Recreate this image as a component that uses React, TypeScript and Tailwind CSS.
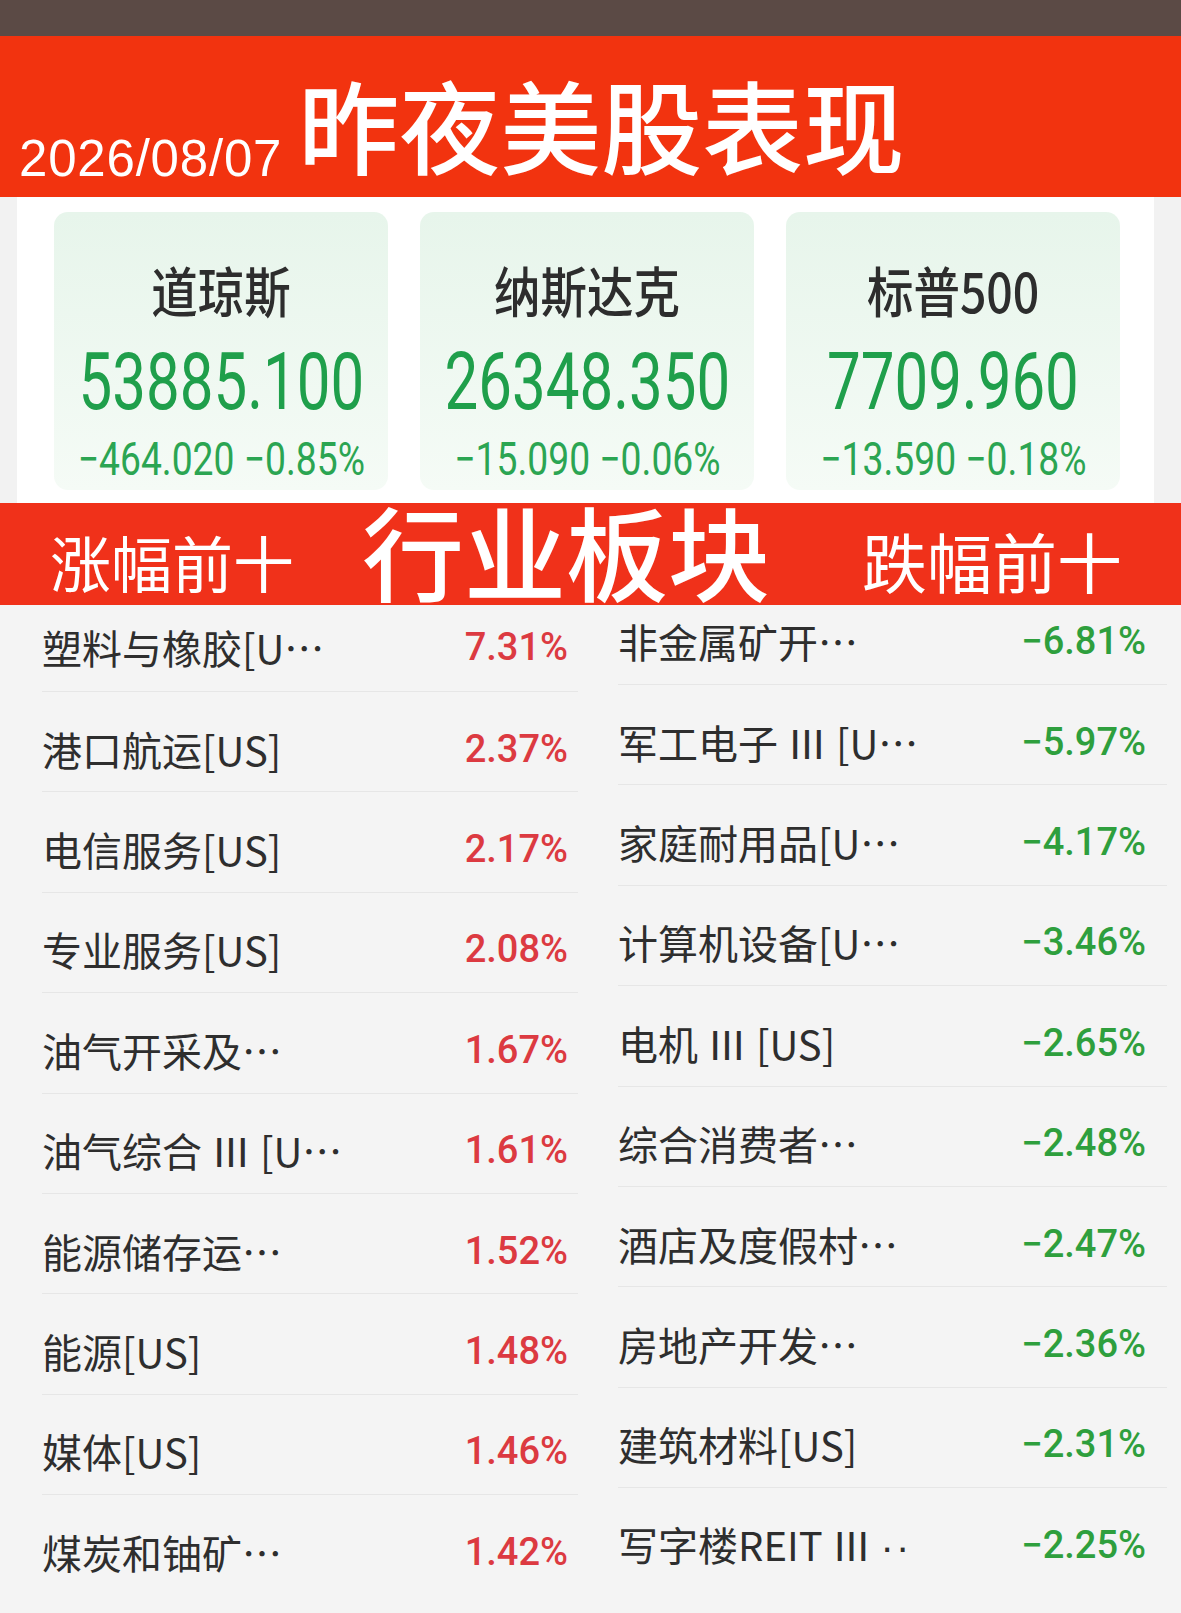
import React from "react";

const CJK = "font-['Noto_Sans_CJK_SC',sans-serif]";
const NUM = "font-['Roboto','Noto_Sans_CJK_SC',sans-serif]";

type Idx = { name: string; value: string; change: string };

const indices: Idx[] = [
  { name: "道琼斯", value: "53885.100", change: "\u2212464.020 \u22120.85%" },
  { name: "纳斯达克", value: "26348.350", change: "\u221215.090 \u22120.06%" },
  { name: "标普500", value: "7709.960", change: "\u221213.590 \u22120.18%" },
];

type Row = { n: React.ReactNode; v: string };

const dots = <span className="font-['Liberation_Sans',sans-serif] tracking-[2px]">··</span>;

const gainers: Row[] = [
  { n: "塑料与橡胶[U…", v: "7.31%" },
  { n: "港口航运[US]", v: "2.37%" },
  { n: "电信服务[US]", v: "2.17%" },
  { n: "专业服务[US]", v: "2.08%" },
  { n: "油气开采及…", v: "1.67%" },
  { n: "油气综合 Ⅲ [U…", v: "1.61%" },
  { n: "能源储存运…", v: "1.52%" },
  { n: "能源[US]", v: "1.48%" },
  { n: "媒体[US]", v: "1.46%" },
  { n: "煤炭和铀矿…", v: "1.42%" },
];

const losers: Row[] = [
  { n: "非金属矿开…", v: "\u22126.81%" },
  { n: "军工电子 Ⅲ [U…", v: "\u22125.97%" },
  { n: "家庭耐用品[U…", v: "\u22124.17%" },
  { n: "计算机设备[U…", v: "\u22123.46%" },
  { n: "电机 Ⅲ [US]", v: "\u22122.65%" },
  { n: "综合消费者…", v: "\u22122.48%" },
  { n: "酒店及度假村…", v: "\u22122.47%" },
  { n: "房地产开发…", v: "\u22122.36%" },
  { n: "建筑材料[US]", v: "\u22122.31%" },
  { n: <>写字楼REIT Ⅲ {dots}</>, v: "\u22122.25%" },
];

function Card({ d }: { d: Idx }) {
  return (
    <div className="h-[278px] rounded-[14px] bg-linear-to-b from-[#e7f5eb] to-[#f5fbf6] flex flex-col items-center overflow-visible">
      <div className={`mt-[51px] h-[54px] text-[54px] leading-none font-medium text-[#2d2d2d] whitespace-nowrap scale-x-[0.86] ${CJK}`}>
        {d.name}
      </div>
      <div className={`mt-[25px] h-[80px] text-[80px] leading-none font-normal text-[#1f9f4b] whitespace-nowrap scale-x-[0.75] ${NUM}`}>
        {d.value}
      </div>
      <div className={`mt-[14px] h-[46px] text-[46px] leading-none text-[#2ba552] whitespace-nowrap scale-x-[0.81] ${NUM}`}>
        {d.change}
      </div>
    </div>
  );
}

function Column({
  rows,
  firstH,
  firstPb,
  color,
  pr,
}: {
  rows: Row[];
  firstH: string;
  firstPb: string;
  color: string;
  pr: string;
}) {
  return (
    <div className="flex flex-col">
      {rows.map((r, i) => {
        const first = i === 0;
        const last = i === rows.length - 1;
        return (
          <div
            key={i}
            className={`flex items-center justify-between ${first ? `${firstH} ${firstPb}` : "h-[100.4px] pt-[14px]"} ${last ? "" : "border-b border-[#e6e6e6]"} ${pr}`}
          >
            <span lang="zh-CN" className={`text-[40px] leading-none text-[#2e2e2e] whitespace-pre ${CJK}`}>
              {r.n}
            </span>
            <span className={`text-[38px] leading-none font-medium whitespace-nowrap ${color} ${NUM}`}>{r.v}</span>
          </div>
        );
      })}
    </div>
  );
}

export default function App() {
  return (
    <div lang="zh-CN" className="w-[1181px] h-[1613px] overflow-hidden bg-[#f4f4f4] flex flex-col">
      {/* top dark bar */}
      <div className="h-[36px] shrink-0 bg-[#5b4a45]" />

      {/* red header */}
      <div className="h-[161px] shrink-0 bg-[#f2330f] flex items-start pl-[19px]">
        <div className="mt-[97px] text-[51px] leading-none tracking-[0.8px] text-white whitespace-nowrap font-['Liberation_Sans',sans-serif]">
          2026/08/07
        </div>
        <div className={`ml-[16px] mt-[37px] text-[101px] leading-none font-medium text-white whitespace-nowrap ${CJK}`}>
          昨夜美股表现
        </div>
      </div>

      {/* index cards */}
      <div className="h-[306px] shrink-0 bg-[#f2f2f2] flex">
        <div className="ml-[17px] w-[1137px] bg-white pt-[15px] pl-[37px] pr-[34px]">
          <div className="grid grid-cols-3 gap-[32px]">
            {indices.map((d) => (
              <Card key={d.name} d={d} />
            ))}
          </div>
        </div>
      </div>

      {/* sector banner */}
      <div className="h-[102px] shrink-0 bg-[#f0311a] flex items-start text-white">
        <div className={`ml-[50px] mt-[28px] text-[61px] leading-none font-normal whitespace-nowrap ${CJK}`}>涨幅前十</div>
        <div className={`ml-[68px] mt-[-4px] text-[102px] leading-none font-medium whitespace-nowrap ${CJK}`}>行业板块</div>
        <div className={`ml-[92px] mt-[25px] text-[65px] leading-none font-normal whitespace-nowrap ${CJK}`}>跌幅前十</div>
      </div>

      {/* lists */}
      <div className="flex-1 flex">
        <div className="ml-[42px] w-[536px]">
          <Column rows={gainers} firstH="h-[87px]" firstPb="pb-[2px]" color="text-[#dc3a41]" pr="pr-[10px]" />
        </div>
        <div className="ml-[40px] w-[549px]">
          <Column rows={losers} firstH="h-[80px]" firstPb="pb-[8px]" color="text-[#2e9f3d]" pr="pr-[21px]" />
        </div>
      </div>
    </div>
  );
}
